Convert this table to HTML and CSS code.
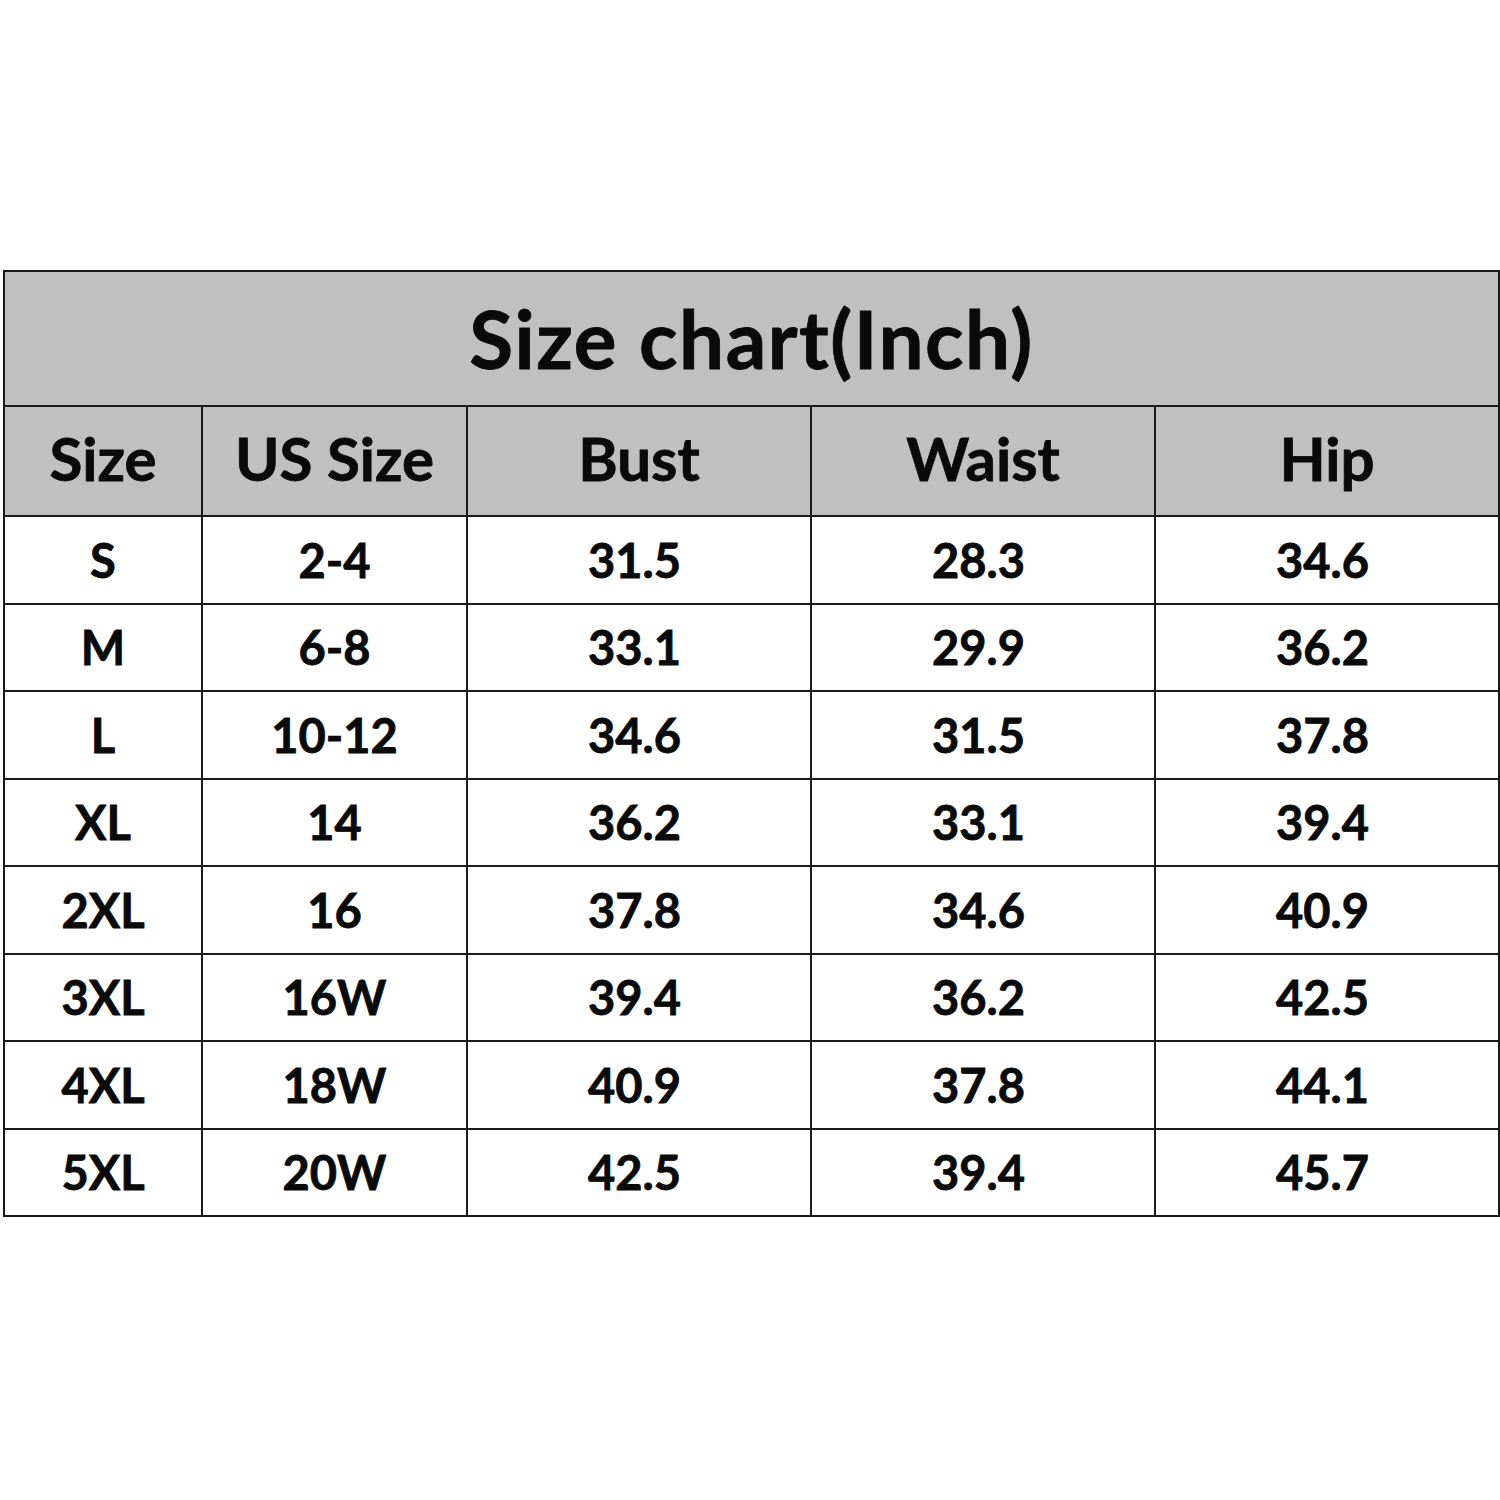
FILE: index.html
```html
<!DOCTYPE html>
<html>
<head>
<meta charset="utf-8">
<link rel="stylesheet" href="styles.css">
</head>
<body>
<div class="page">
<table class="chart">
<colgroup>
<col class="c1"><col class="c2"><col class="c3"><col class="c4"><col class="c5">
</colgroup>
<thead>
<tr class="title-row"><th colspan="5">Size chart(Inch)</th></tr>
<tr class="head-row"><th>Size</th><th>US Size</th><th>Bust</th><th>Waist</th><th>Hip</th></tr>
</thead>
<tbody>
<tr><td>S</td><td>2-4</td><td>31.5</td><td>28.3</td><td>34.6</td></tr>
<tr><td>M</td><td>6-8</td><td>33.1</td><td>29.9</td><td>36.2</td></tr>
<tr><td>L</td><td>10-12</td><td>34.6</td><td>31.5</td><td>37.8</td></tr>
<tr><td>XL</td><td>14</td><td>36.2</td><td>33.1</td><td>39.4</td></tr>
<tr><td>2XL</td><td>16</td><td>37.8</td><td>34.6</td><td>40.9</td></tr>
<tr><td>3XL</td><td>16W</td><td>39.4</td><td>36.2</td><td>42.5</td></tr>
<tr><td>4XL</td><td>18W</td><td>40.9</td><td>37.8</td><td>44.1</td></tr>
<tr><td>5XL</td><td>20W</td><td>42.5</td><td>39.4</td><td>45.7</td></tr>
</tbody>
</table>
</div>
</body>
</html>
```
FILE: styles.css
```css
html, body {
  margin: 0;
  padding: 0;
  background: #ffffff;
}
.page {
  padding: 270px 2px 0 3px;
}
.chart {
  border-collapse: collapse;
  table-layout: fixed;
  width: 1495px;
  font-family: Lato, "Open Sans", sans-serif;
  font-weight: 700;
  color: #0a0a0a;
  -webkit-text-stroke: 0.8px #0a0a0a;
}
.c1 { width: 198px; }
.c2 { width: 265px; }
.c3 { width: 344px; }
.c4 { width: 344px; }
.c5 { width: 344px; }
.chart th, .chart td {
  border: 2px solid #1a1a1a;
  text-align: center;
  padding: 0;
}
.title-row th {
  background: #c0c0c0;
  height: 133px;
  font-size: 80px;
  letter-spacing: 1.5px;
  padding-bottom: 2px;
  height: 131px;
}
.head-row th {
  background: #c0c0c0;
  height: 102px;
  font-size: 60px;
  padding-bottom: 6px;
}
.chart td {
  height: 85.5px;
  font-size: 47px;
}
.chart td:nth-child(n+3) {
  padding-right: 9px;
}
```
